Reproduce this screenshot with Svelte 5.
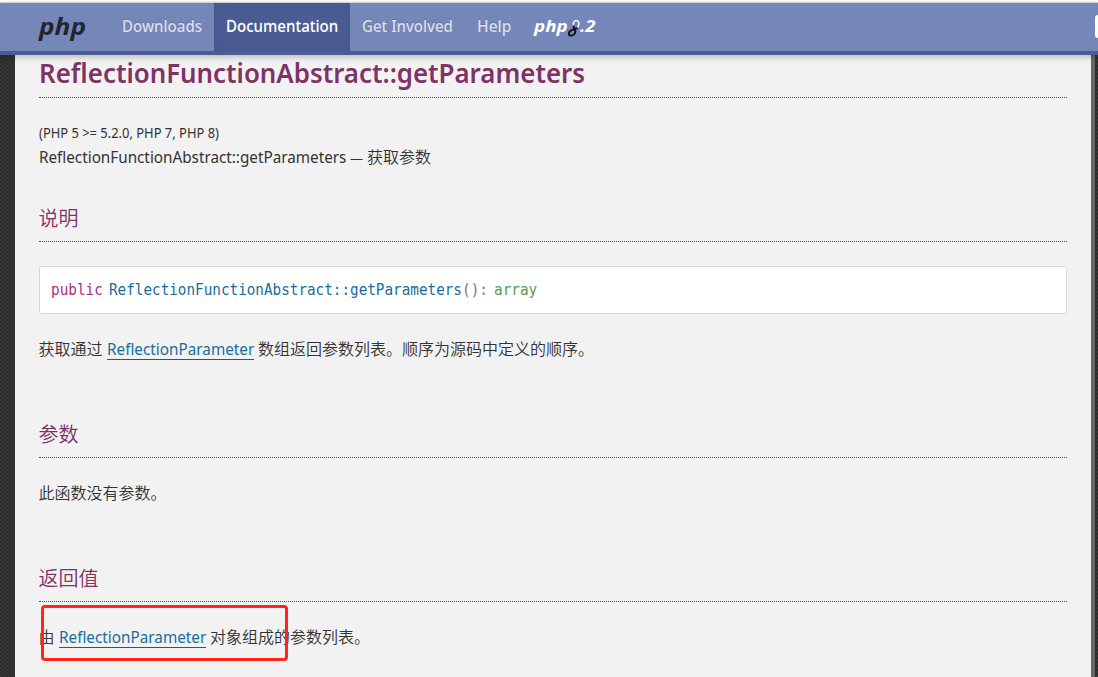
<script>
  function condense(node, width) {
    node.style.transform = `scaleX(${width / node.offsetWidth})`;
  }
  const nav = [
    { label: 'Downloads', width: 80 },
    { label: 'Documentation', width: 112, active: true },
    { label: 'Get Involved', width: 91 },
    { label: 'Help', width: 34 }
  ];
</script>

{#snippet run(text, width, cls = '')}<span class="run {cls}" style="width:{width}px"><span class="glyphs" use:condense={width}>{text}</span></span>{/snippet}

<div class="page">
  <header>
    <div class="brand">{@render run('php', 47, 'logo')}</div>
    <nav>
      {#each nav as item}
        <a class:active={item.active}>{@render run(item.label, item.width)}</a>
      {/each}
      <div class="release">
        {@render run('php', 34)}
        <svg width="14" height="20" viewBox="0 0 14 20" fill="none" stroke-linecap="round">
          <path d="M9.8 10C12.4 8.2 12.8 3.2 10 2.6C7.2 2.2 5.4 5.2 6.4 8.2" stroke="#fff" stroke-width="1.4" />
          <path d="M6.4 8.2C7.2 10.8 9.6 12.6 7.8 15.6C6.2 18.4 2 18.2 1.8 15.6C1.7 13 5.2 11.3 10 10.2" stroke="#111" stroke-width="1.9" />
        </svg>
        {@render run('.2', 15)}
      </div>
    </nav>
    <div class="search"></div>
  </header>
  <div class="body">
    <main>
      <h1>{@render run('ReflectionFunctionAbstract::getParameters', 546)}</h1>
      <p class="version">{@render run('(PHP 5 >= 5.2.0, PHP 7, PHP 8)', 180)}</p>
      <p class="purpose">{@render run('ReflectionFunctionAbstract::getParameters', 307)}<span class="dash">—</span>获取参数</p>
      <h3 class="first"><span>说明</span></h3>
      <div class="synopsis">
        {@render run('public', 52, 'modifier')}
        {@render run('ReflectionFunctionAbstract::getParameters', 353, 'method')}
        {@render run('():', 26, 'punct')}
        {@render run('array', 43, 'type')}
      </div>
      <p class="para">获取通过<a class="link">{@render run('ReflectionParameter', 147)}</a>数组返回参数列表。顺序为源码中定义的顺序。</p>
      <h3><span>参数</span></h3>
      <p class="para">此函数没有参数。</p>
      <h3><span>返回值</span></h3>
      <p class="para marked">由<a class="link">{@render run('ReflectionParameter', 147)}</a>对象组成的参数列表。<span class="marker"></span></p>
    </main>
  </div>
</div>

<style>
  :global(body) { margin: 0; overflow: hidden; }
  .page {
    width: 1098px; height: 677px; overflow: hidden; box-sizing: border-box;
    display: flex; flex-direction: column; padding-top: 2px;
    font: 15.5px/24px "Noto Sans", "Noto Sans CJK SC", sans-serif; color: #333;
    background: #fff;
  }
  .run { display: inline-block; white-space: nowrap; }
  .glyphs { display: inline-block; transform-origin: 0 50%; }
  header {
    position: relative; z-index: 1; flex: none; height: 53px; box-sizing: border-box;
    display: flex; background: #7587b8;
    border-top: 1px solid #d0d3d2; border-bottom: 4px solid #4b5c94;
    box-shadow: 0 2px 6px rgba(0, 0, 0, .25);
  }
  .brand { width: 71px; padding-left: 39px; color: #20252f; font: italic 700 24px/45px "Open Sans", sans-serif; }
  nav { display: flex; flex: 1; }
  nav a { padding: 0 12px; line-height: 46px; font-size: 16px; font-weight: 500; color: #dcdfec; text-shadow: 0 -1px 0 #66739f; }
  nav a.active { background: #4b5c94; color: #fff; box-shadow: inset 0 0 10px #46548a; }
  nav a:not(.active) .glyphs { margin-left: -.5px; }
  .release { display: flex; padding-left: 11px; color: #fff; font: italic 700 16px/47px "Open Sans", sans-serif; }
  .release svg { flex: none; margin: 15px -1px 0 -1px; }
  .search { width: 3px; height: 23px; margin-top: 12px; background: #fff; border-radius: 3px 0 0 3px; }
  .body {
    flex: 1; display: flex; padding: 0 3px 0 15px;
    background: repeating-conic-gradient(#2c2c2c 0 25%, #353535 0 50%) 0 0 / 4px 4px;
  }
  main { flex: 1; background: #f2f2f2; border-right: 4px solid #666; padding: 0 24px; }
  h1, h3, p { margin: 0; }
  h1, h3 { color: #7f3263; border-bottom: 1px dotted #793862; box-sizing: border-box; }
  h1 { height: 43px; font-size: 27px; font-weight: 600; line-height: 36px; }
  .version { margin-top: 23px; height: 24px; font-size: 13.5px; }
  .version .glyphs { margin-left: -.5px; }
  .purpose, .para { height: 24px; font-size: 16px; font-weight: 350; white-space: nowrap; }
  .purpose .run, .link .run { font-size: 15.5px; font-weight: 400; }
  .dash { display: inline-block; width: 21px; text-align: center; font-size: 13px; font-weight: 400; }
  h3 { margin-top: 61px; height: 36px; font: 350 20px/24px "Noto Sans CJK SC", sans-serif; }
  h3 span { margin-left: -.5px; }
  h3.first { margin-top: 37px; }
  .synopsis {
    display: flex; height: 48px; box-sizing: border-box; margin: 24px 0 0; padding: 0 11px;
    background: #fff; border: 1px solid #d9d9d9; border-radius: 2px;
    font: 16px/45px "DejaVu Sans Mono", monospace;
  }
  .modifier { color: #a83278; margin-right: 6px; }
  .method { color: #1a6c9c; }
  .punct { color: #777; margin-right: 6px; }
  .type { color: #559b50; }
  .para { margin: 23px 0 0 -.5px; }
  .link { color: #1a6c9c; display: inline-block; height: 22px; margin: 0 4px 0 4.5px; border-bottom: 1px solid #069; }
  .marked { position: relative; }
  .marker { position: absolute; left: 2.5px; top: -20px; width: 247px; height: 56px; box-sizing: border-box; border: 3px solid #ff2618; border-radius: 4px; }
</style>
